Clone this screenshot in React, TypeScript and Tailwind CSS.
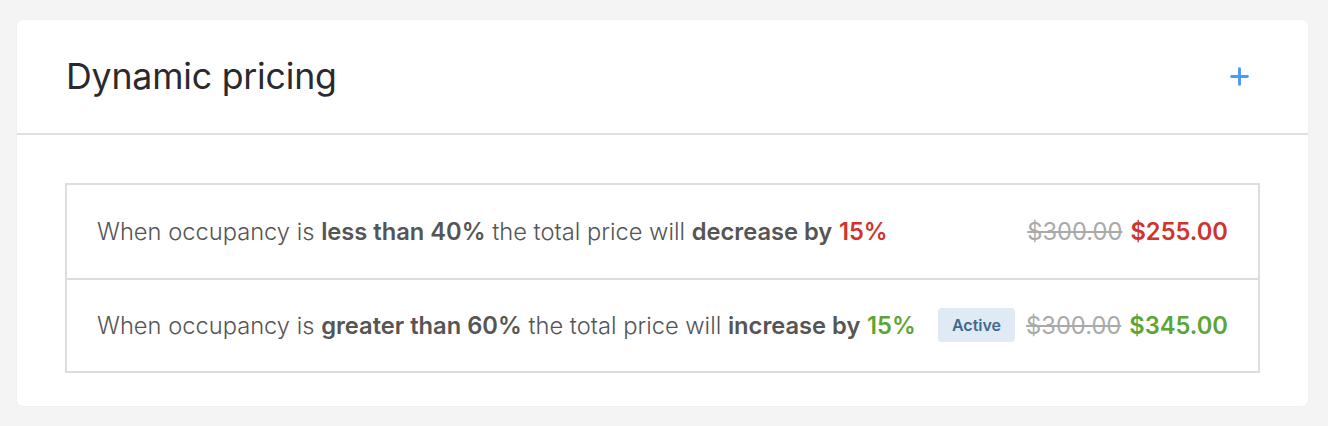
import { Plus } from "lucide-react";

const rules = [
  {
    condition: "less than 40%",
    action: "decrease by",
    percent: "15%",
    tone: "text-[#d0342c]",
    original: "$300.00",
    price: "$255.00",
    active: false,
  },
  {
    condition: "greater than 60%",
    action: "increase by",
    percent: "15%",
    tone: "text-[#5ca537]",
    original: "$300.00",
    price: "$345.00",
    active: true,
  },
];

export default function App() {
  return (
    <div className="min-h-[426px] bg-[#f4f4f4] pl-[17px] pr-[20px] pt-[20px] pb-[21px] font-['Inter',sans-serif]">
      <div className="rounded-md bg-white shadow-[0_0_2px_rgba(0,0,0,0.06)]">
        {/* Header */}
        <div className="flex h-[115px] items-center justify-between border-b-2 border-[#e0e0e0] pl-[49px] pr-[55px]">
          <h1 className="text-[35.7px] font-normal tracking-[-0.2px] text-[#2a2a2e]">
            Dynamic pricing
          </h1>
          <button className="text-[#4a9cf5]">
            <Plus className="h-[27px] w-[27px]" strokeWidth={2.6} />
          </button>
        </div>

        {/* Rules */}
        <div className="px-[48px] pt-[48px] pb-[33px]">
          <div className="border-2 border-[#dddddd]">
            {rules.map((rule, i) => (
              <div
                key={rule.condition}
                className={`flex h-[93px] items-center justify-between px-[30px] text-[23.7px] text-[#555] ${
                  i > 0 ? "border-t-2 border-[#dddddd]" : ""
                }`}
              >
                <p className="font-light">
                  When occupancy is{" "}
                  <span className="font-semibold">{rule.condition}</span> the total price will{" "}
                  <span className="font-semibold">{rule.action}</span>{" "}
                  <span className={`font-semibold ${rule.tone}`}>{rule.percent}</span>
                </p>
                <div className="flex items-center gap-[8px]">
                  {rule.active && (
                    <span className="mr-[3px] rounded-[4px] bg-[#dfeaf5] px-[14px] py-[5px] text-[16px] font-semibold text-[#3e6a8e]">
                      Active
                    </span>
                  )}
                  <span className="font-normal text-[#aaa] line-through">{rule.original}</span>
                  <span className={`font-semibold ${rule.tone}`}>{rule.price}</span>
                </div>
              </div>
            ))}
          </div>
        </div>
      </div>
    </div>
  );
}
